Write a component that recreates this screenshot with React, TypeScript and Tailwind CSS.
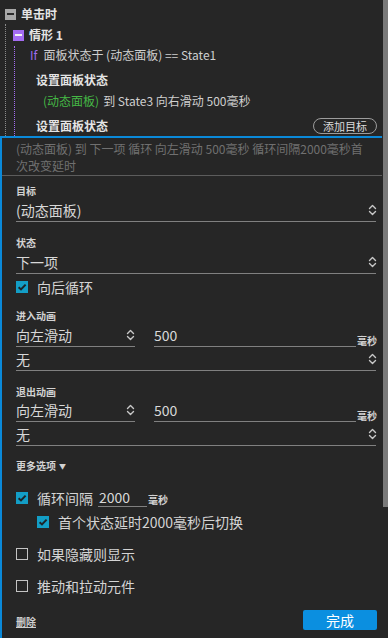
import React from "react";

function Chevrons() {
  return (
    <svg width="9" height="14" viewBox="0 0 9 14" fill="none" stroke="#c8c8c8" strokeWidth="1.4" strokeLinecap="round" strokeLinejoin="round">
      <path d="M1.5 5.5L4.5 2.5L7.5 5.5" />
      <path d="M1.5 8.5L4.5 11.5L7.5 8.5" />
    </svg>
  );
}

function Box({ checked }: { checked: boolean }) {
  return checked ? (
    <div className="w-[12px] h-[12px] shrink-0 bg-[#139ec6] flex items-center justify-center">
      <svg width="10" height="10" viewBox="0 0 10 10">
        <path d="M1.6 5.2L4 7.4L8.6 2.6" stroke="#1d2428" strokeWidth="2" fill="none" />
      </svg>
    </div>
  ) : (
    <div className="w-[12px] h-[12px] shrink-0 border border-[#c4c4c4]" />
  );
}

function Label({ children, className = "" }: { children: React.ReactNode; className?: string }) {
  return (
    <div className={"h-[14px] text-[10px] font-bold leading-[14px] text-[#d2d2d2] " + className}>{children}</div>
  );
}

function Select({ value, className = "" }: { value: string; className?: string }) {
  return (
    <div className={"h-[23px] border-b border-[#808080] flex items-center justify-between text-[14px] leading-none text-[#d8d8d8] " + className}>
      <span>{value}</span>
      <span className="mr-[-1px]">
        <Chevrons />
      </span>
    </div>
  );
}

function AnimRow() {
  return (
    <div className="flex items-end">
      <div className="w-[119px] shrink-0 h-[23px] border-b border-[#808080] flex items-center justify-between text-[14px] leading-none text-[#d8d8d8]">
        <span>向左滑动</span>
        <Chevrons />
      </div>
      <div className="ml-[19px] w-[202px] shrink-0 h-[23px] border-b border-[#808080] flex items-center text-[14px] leading-none text-[#d8d8d8]">
        500
      </div>
      <div className="ml-[1px] mb-[1px] shrink-0 whitespace-nowrap text-[10px] leading-[10px] font-bold text-[#d2d2d2]">毫秒</div>
    </div>
  );
}

export default function App() {
  return (
    <div className="w-[388px] h-[638px] bg-[#262626] flex overflow-hidden font-['Noto_Sans_CJK_SC','Noto_Sans',sans-serif] text-[#d4d4d4]">
      <div className="flex-1 min-w-0 flex flex-col">
        {/* tree */}
        <div className="pt-[4px]">
          <div className="h-[20px] flex items-center pl-[5px]">
            <div className="w-[11px] h-[11px] bg-[#a8a8a8] flex items-center justify-center">
              <div className="w-[7px] h-[2px] bg-[#2a2a2a]" />
            </div>
            <span className="ml-[5px] text-[12px] font-bold leading-none text-[#e4e4e4]">单击时</span>
          </div>
          <div className="ml-[5px] border-l border-dotted border-[#8a8a8a]">
            <div className="h-[22px] flex items-center pl-[7px]">
              <div className="w-[11px] h-[11px] bg-[#a46cf2] flex items-center justify-center">
                <div className="w-[7px] h-[2px] bg-[#f2f2f2]" />
              </div>
              <span className="ml-[5px] text-[12px] font-bold leading-none text-[#e4e4e4]">情形 1</span>
            </div>
            <div className="ml-[8px] border-l border-dotted border-[#a46cf2] pr-[6px]">
              <div className="h-[18px] flex items-center pl-[15px] text-[12px] leading-none">
                <span className="text-[#9c6cf0]">If</span>
                <span className="ml-[6px] text-[#cfcfcf]">面板状态于 (动态面板) == State1</span>
              </div>
              <div className="mt-[6px] h-[20px] flex items-center pl-[21px] text-[12px] font-bold leading-none text-[#e4e4e4]">
                设置面板状态
              </div>
              <div className="mt-[1px] h-[20px] flex items-center pl-[28px] text-[12px] leading-none text-[#cfcfcf]">
                <span className="text-[#45b845]">(动态面板)</span>
                <span className="ml-[4px]">到 State3 向右滑动 500毫秒</span>
              </div>
              <div className="mt-[5px] h-[20px] flex items-center justify-between pl-[21px]">
                <span className="text-[12px] font-bold leading-none text-[#e4e4e4]">设置面板状态</span>
                <div className="w-[64px] h-[16px] rounded-full border border-[#9c9c9c] flex items-center justify-center text-[11px] leading-none text-[#dcdcdc]">
                  添加目标
                </div>
              </div>
            </div>
          </div>
        </div>

        {/* panel */}
        <div className="flex-1 mr-[1px] border-t-2 border-l-2 border-[#0a89d9] flex flex-col">
          <div className="pl-[14px] pr-[6px] pt-[2px] pb-[1px] border-b border-[#5c5c5c] text-[12px] leading-[17px] text-[#707070]">
            (动态面板) 到 下一项 循环 向左滑动 500毫秒 循环间隔2000毫秒首
            <br />
            次改变延时
          </div>
          <div className="pl-[14px] pr-[6px] flex flex-col">
            <Label className="mt-[8px]">目标</Label>
            <Select className="mt-[1px]" value="(动态面板)" />
            <Label className="mt-[14px]">状态</Label>
            <Select className="mt-[1px]" value="下一项" />
            <div className="mt-[3px] h-[20px] flex items-center">
              <Box checked />
              <span className="ml-[9px] text-[14px] leading-none text-[#d4d4d4]">向后循环</span>
            </div>

            <Label className="mt-[12px]">进入动画</Label>
            <div className="mt-[1px]">
              <AnimRow />
            </div>
            <Select className="mt-[1px]" value="无" />

            <Label className="mt-[14px]">退出动画</Label>
            <div>
              <AnimRow />
            </div>
            <Select className="mt-[1px]" value="无" />

            <Label className="mt-[13px] flex items-center">
              更多选项<span className="ml-[3px] text-[7px] leading-none">▼</span>
            </Label>

            <div className="mt-[15px] h-[20px] flex items-center">
              <Box checked />
              <span className="ml-[9px] text-[14px] leading-none text-[#d4d4d4]">循环间隔</span>
              <div className="ml-[5px] w-[49px] h-[19px] self-start border-b border-[#808080] flex items-center pl-[1px] text-[14px] leading-none text-[#d8d8d8]">
                2000
              </div>
              <span className="ml-[1px] self-end mb-[3px] text-[10px] leading-[10px] font-bold text-[#d2d2d2]">毫秒</span>
            </div>
            <div className="mt-[4px] h-[20px] flex items-center pl-[21px]">
              <Box checked />
              <span className="ml-[9px] text-[14px] leading-none text-[#d4d4d4]">首个状态延时2000毫秒后切换</span>
            </div>
            <div className="mt-[12px] h-[20px] flex items-center">
              <Box checked={false} />
              <span className="ml-[9px] text-[14px] leading-none text-[#d4d4d4]">如果隐藏则显示</span>
            </div>
            <div className="mt-[12px] h-[20px] flex items-center">
              <Box checked={false} />
              <span className="ml-[9px] text-[14px] leading-none text-[#d4d4d4]">推动和拉动元件</span>
            </div>

            <div className="mt-[14px] h-[20px] flex items-center justify-between">
              <span className="mt-[4px] text-[10px] leading-[10px] font-bold text-[#cfcfcf] underline">删除</span>
              <div className="w-[74px] h-[20px] mr-[-1px] bg-[#0b8fe0] rounded-[2px] flex items-center justify-center text-[14px] leading-none text-white">
                完成
              </div>
            </div>
          </div>
        </div>
      </div>
      <div className="w-[5px] flex flex-col">
        <div className="h-[507px] bg-[#7a7a7a]" />
      </div>
    </div>
  );
}
